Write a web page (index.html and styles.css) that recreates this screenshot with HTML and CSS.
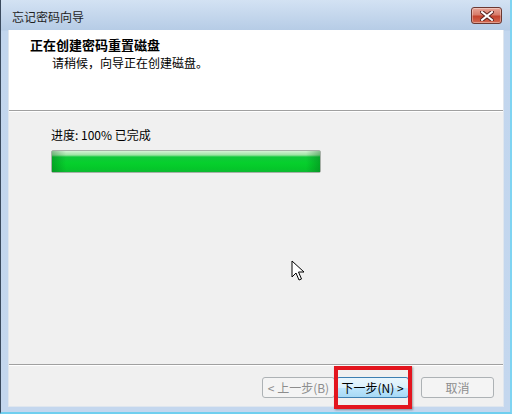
FILE: index.html
```html
<!DOCTYPE html>
<html>
<head>
    <title>忘记密码向导</title>
    <link rel="stylesheet" href="styles.css">
</head>
<body>
    <div class="window">
        <div class="title-bar">
            <span class="title-text">忘记密码向导</span>
            <button class="close-button" aria-label="关闭">
                <svg width="14" height="10" viewBox="0 0 14 10">
                    <path d="M2 1 L12 9 M12 1 L2 9" stroke="#5a2320" stroke-width="4" stroke-linecap="square"/>
                    <path d="M2 1 L12 9 M12 1 L2 9" stroke="#ffffff" stroke-width="2" stroke-linecap="square"/>
                </svg>
            </button>
        </div>
        <div class="dialog">
            <div class="wizard-header">
                <h2 class="header-title">正在创建密码重置磁盘</h2>
                <p class="header-subtitle">请稍候，向导正在创建磁盘。</p>
            </div>
            <div class="wizard-body">
                <p class="progress-label">进度: 100% 已完成</p>
                <div class="progress-bar">
                    <div class="progress-fill"></div>
                </div>
                <svg class="cursor" width="14" height="22" viewBox="0 0 14 22">
                    <path d="M1 1 L1 17 L5 13 L8 20 L10.5 19 L7.5 12 L13 12 Z" fill="#ffffff" stroke="#000000" stroke-width="1" stroke-linejoin="round"/>
                </svg>
            </div>
            <div class="wizard-footer">
                <button class="wizard-button" disabled>&lt; 上一步(B)</button>
                <span class="highlight">
                    <button class="wizard-button next-button">下一步(N) &gt;</button>
                </span>
                <button class="wizard-button cancel-button" disabled>取消</button>
            </div>
        </div>
    </div>
</body>
</html>
```

FILE: styles.css
```css
body {
    margin: 0;
    width: 512px;
    height: 414px;
    overflow: hidden;
    font-family: "SimSun", "Noto Sans CJK SC", "Liberation Sans", sans-serif;
    font-size: 12px;
    background-color: #c4d6ec;
}

.window {
    box-sizing: border-box;
    width: 512px;
    height: 414px;
    display: flex;
    flex-direction: column;
    padding: 0 6px 5px 7px;
    border-left: 1px solid #3a4a5e;
    border-right: 2px solid #7fd4f2;
    border-bottom: 2px solid #6fcfef;
    background: linear-gradient(to bottom, #d3e2f3 0px, #b6cce6 30px, #c2d6ee 31px, #c4d7ee 100%);
}

.title-bar {
    height: 30px;
    display: flex;
    align-items: center;
    justify-content: space-between;
    flex-shrink: 0;
}

.title-text {
    color: #1e1e1e;
    padding-left: 4px;
    padding-top: 2px;
}

.close-button {
    width: 31px;
    height: 17px;
    margin-right: 2px;
    margin-top: 1px;
    padding: 0;
    border: 1px solid #6b3832;
    border-radius: 3px;
    background: linear-gradient(to bottom, #e8a497 0%, #d77d6b 45%, #c4432d 55%, #d36a52 100%);
    box-shadow: inset 0 0 0 1px rgba(255, 255, 255, 0.35);
    display: flex;
    align-items: center;
    justify-content: center;
}

.dialog {
    flex: 1;
    display: flex;
    flex-direction: column;
    background-color: #f0f0f0;
    border: 1px solid #dfe6ee;
    border-top: none;
}

.wizard-header {
    height: 81px;
    background-color: #ffffff;
    border-bottom: 1px solid #a0a0a0;
    box-shadow: 0 1px 0 #ffffff;
    padding: 7px 0 0 21px;
    box-sizing: border-box;
    flex-shrink: 0;
}

.header-title {
    margin: 0;
    font-size: 13px;
    line-height: 16px;
    font-weight: bold;
    color: #000000;
}

.header-subtitle {
    margin: 2px 0 0 22px;
    font-size: 12px;
    line-height: 16px;
    color: #000000;
}

.wizard-body {
    position: relative;
    flex: 1;
    padding: 16px 0 0 42px;
}

.progress-label {
    margin: 0;
    line-height: 16px;
    color: #000000;
}

.progress-bar {
    width: 268px;
    height: 21px;
    margin-top: 7px;
    border: 1px solid #a8b0a8;
    border-radius: 2px;
    background-color: #e6e6e6;
}

.progress-fill {
    height: 100%;
    background:
        linear-gradient(to right, rgba(0, 90, 20, 0.35) 0px, rgba(0, 90, 20, 0) 14px, rgba(0, 90, 20, 0) 254px, rgba(0, 90, 20, 0.35) 268px),
        linear-gradient(to bottom, #d6f2d6 0px, #9ee4a4 4px, #10c83a 6px, #06d02c 12px, #05c62a 18px, #10b834 21px);
}

.cursor {
    position: absolute;
    left: 282px;
    top: 149px;
}

.wizard-footer {
    height: 42px;
    flex-shrink: 0;
    border-top: 1px solid #a0a0a0;
    box-shadow: inset 0 1px 0 #ffffff;
    display: flex;
    justify-content: flex-end;
    align-items: flex-start;
    padding: 12px 9px 0 0;
    box-sizing: border-box;
}

.wizard-button {
    width: 73px;
    height: 21px;
    padding: 0;
    font-family: inherit;
    font-size: 12px;
    color: #000000;
    border: 1px solid #707070;
    border-radius: 3px;
    background: linear-gradient(to bottom, #f2f2f2 0%, #ebebeb 50%, #dddddd 51%, #cfcfcf 100%);
}

.wizard-button:disabled {
    color: #8d8d8d;
    border-color: #adb2b5;
    background: #f4f4f4;
}

.highlight {
    position: relative;
    margin-left: 1px;
}

.highlight::after {
    content: "";
    position: absolute;
    left: -2px;
    top: -11px;
    width: 70px;
    height: 35px;
    border: 4px solid #e3151e;
    box-shadow: 1px 1px 2px rgba(0, 0, 0, 0.35);
}

.next-button {
    border-color: #3c7fb1;
    background: linear-gradient(to bottom, #eaf6fd 0%, #d9f0fc 50%, #bee6fd 51%, #a7d9f5 100%);
}

.cancel-button {
    margin-left: 12px;
}
```
